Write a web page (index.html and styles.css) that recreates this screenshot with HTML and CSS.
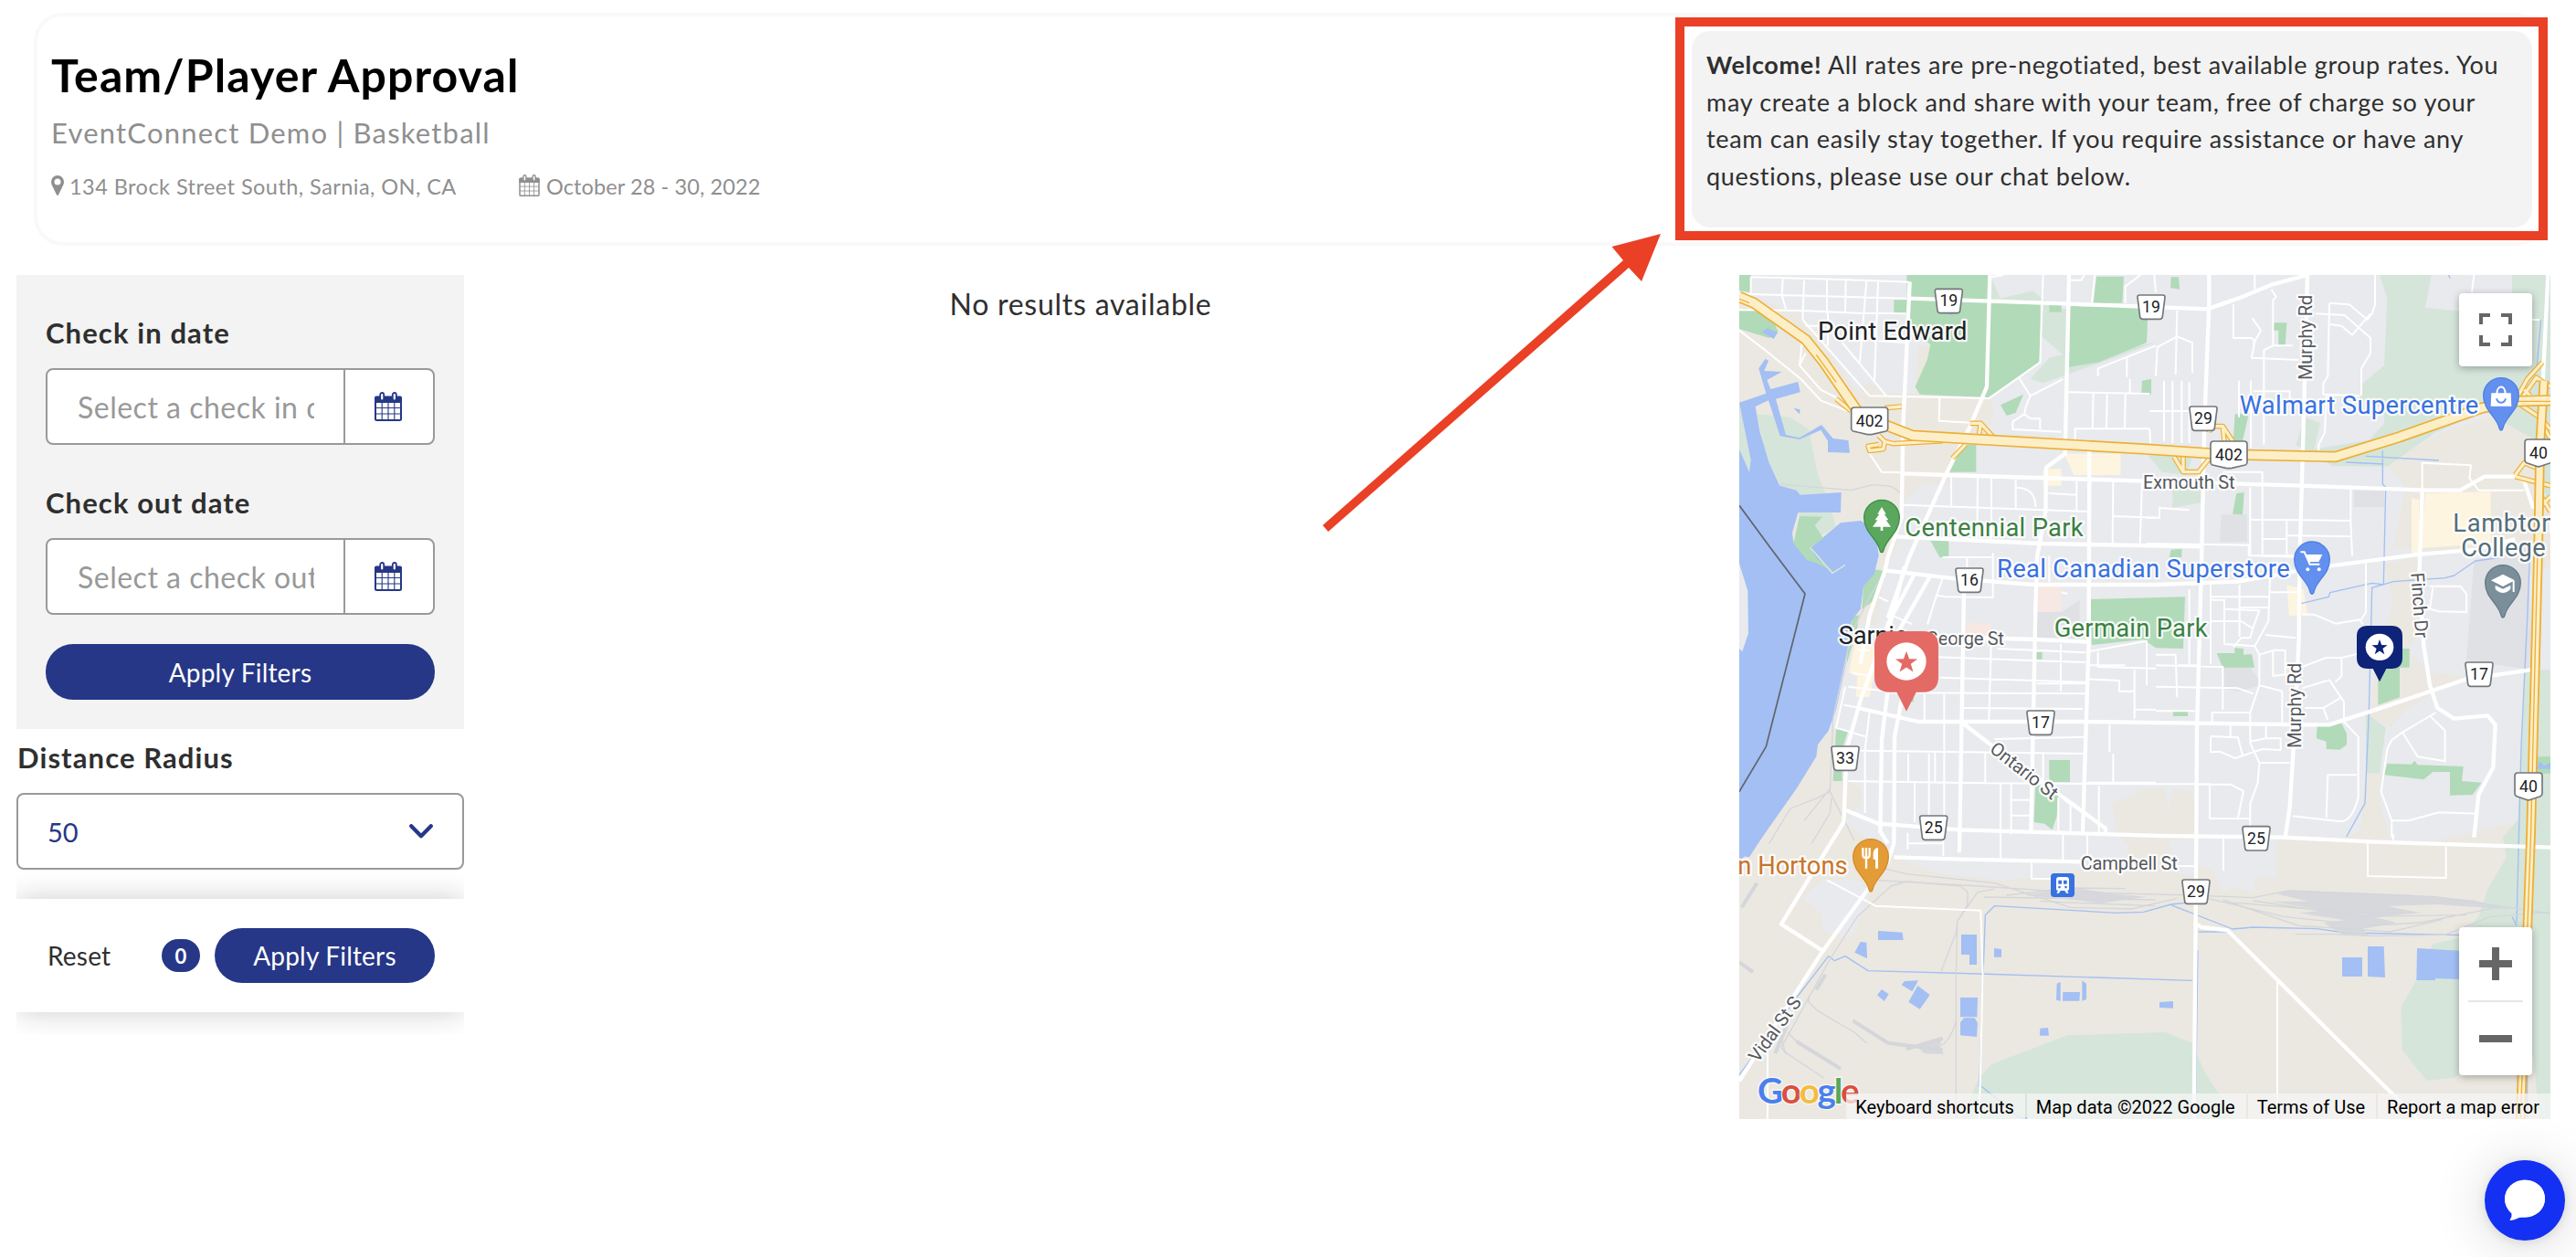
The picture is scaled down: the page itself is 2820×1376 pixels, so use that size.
FILE: index.html
```
<!DOCTYPE html>
<html lang="en">
<head>
  <meta charset="UTF-8">
  <meta name="viewport" content="width=device-width, initial-scale=1.0">
  <title>Team/Player Approval - EventConnect</title>
  <link rel="stylesheet" href="styles.css">
</head>
<body>
  <!-- shared icons -->
  <svg class="defs" width="0" height="0">
    <symbol id="calendar" viewBox="0 0 30 32">
      <path d="M2 4.500h26a2 2 0 0 1 2 2V12H0V6.500a2 2 0 0 1 2-2z" fill="currentColor"/>
      <rect x="1" y="6" width="28" height="25" rx="1.500" fill="none" stroke="currentColor" stroke-width="2"/>
      <path d="M8.200 11v20M15 11v20M21.800 11v20M1 17.500h28M1 24h28" stroke="currentColor" stroke-width="1.100"/>
      <rect x="6.200" y="1" width="4" height="8.500" rx="2" class="ring" stroke="currentColor" stroke-width="1.800"/>
      <rect x="19.800" y="1" width="4" height="8.500" rx="2" class="ring" stroke="currentColor" stroke-width="1.800"/>
    </symbol>
    <symbol id="star" viewBox="-100 -100 200 200">
      <path d="M0-100 24-33 95-31 38 12 59 81 0 40-59 81-38 12-95-31-24-33z" fill="currentColor"/>
    </symbol>
  </svg>

  <header class="event-header">
    <div class="event-info">
      <h1 class="event-title">Team/Player Approval</h1>
      <div class="event-subtitle">EventConnect Demo | Basketball</div>
      <div class="event-meta">
        <svg class="pin-icon" viewBox="0 0 14 22"><path fill="currentColor" fill-rule="evenodd" d="M7 0a7 7 0 0 1 7 7c0 2.500-1 4-2.200 6.500L8 21.200q-1 1.400-2 0L2.200 13.500C1 11 0 9.500 0 7a7 7 0 0 1 7-7zm0 3.600a3.500 3.500 0 1 0 0 7 3.500 3.500 0 0 0 0-7z"/></svg>
        <span class="event-address">134 Brock Street South, Sarnia, ON, CA</span>
        <svg class="date-icon"><use href="#calendar"/></svg>
        <span class="event-date">October 28 - 30, 2022</span>
      </div>
    </div>
    <div class="welcome">
      <strong>Welcome!</strong> All rates are pre-negotiated, best available group rates. You may create a block and share with your team, free of charge so your team can easily stay together. If you require assistance or have any questions, please use our chat below.
    </div>
  </header>

  <main class="content">
    <aside class="sidebar">
      <div class="date-filters">
        <label class="label">Check in date</label>
        <div class="date-input">
          <div class="date-text"><span>Select a check in date</span></div>
          <button class="date-btn" type="button" aria-label="Pick check in date"><svg><use href="#calendar"/></svg></button>
        </div>
        <label class="label">Check out date</label>
        <div class="date-input">
          <div class="date-text"><span>Select a check out date</span></div>
          <button class="date-btn" type="button" aria-label="Pick check out date"><svg><use href="#calendar"/></svg></button>
        </div>
        <button class="btn btn-wide" type="button">Apply Filters</button>
      </div>
      <label class="label radius-label">Distance Radius</label>
      <div class="select">
        <span>50</span>
        <svg class="chevron" viewBox="0 0 26 16"><path d="M2.200 2.200 13 13.300 23.800 2.200" fill="none" stroke="currentColor" stroke-width="4.200" stroke-linecap="round" stroke-linejoin="round"/></svg>
      </div>
      <div class="filter-bar-wrap">
        <div class="filter-bar">
          <span class="reset">Reset</span>
          <span class="count">0</span>
          <button class="btn btn-small" type="button">Apply Filters</button>
        </div>
      </div>
    </aside>

    <section class="results">No results available</section>

    <section class="map">
      <svg class="map-canvas" viewBox="12 3 2664 2772">
        <rect x="12" y="3" width="2664" height="2772" fill="#e8eaed"/>

        <g fill="#ebe8e1">
          <path d="M12 55 100 90 215 135 225 160 300 245 400 385 440 350 480 390 590 392 600 240 640 235 640 400 840 405 850 460 825 525 1040 530 1100 560 790 565 700 685 610 695 555 745 530 900 490 970 470 1150 12 1150z"/>
          <path d="M470 960 400 1120 360 1290 330 1490 300 1500 12 1880V2775H2676V1800L2520 1810 2290 1862 2150 1860 2110 1700 2130 1640 2070 1640 2050 1830 1990 1850 1775 1860 1775 1980 1705 1980 1700 2030 1640 2015 1600 2030 1570 1960 1520 1940 1500 1980 1430 1960 1425 1860 1520 1850 1500 1700 1440 1690 1420 1760 1410 1690 1350 1690 1236 1740 1250 1830 1290 1880 1285 1915 1030 1980 860 1990 670 1970 510 1910 470 1880 360 1800 410 1740 410 1690 360 1660 320 1640 340 1400 390 1200z"/>
          <path d="M2140 620 2320 520 2510 460 2600 530 2676 560V950L2620 1000 2480 850 2480 700 2440 920 2160 900 2200 700z"/>
          <path d="M2130 950 2240 930 2250 1180 2200 1230 2280 1310 2400 1320 2200 1430 2150 1490 2080 1450 2110 1240 2160 1080z"/>
        </g>
        <path d="M285 1990 400 1990 440 2040 380 2180 290 2160 280 2100 220 2050z" fill="#e8eaed"/>

        <g fill="#d5e5da">
          <path d="M2115 3 2140 80 2130 300 2058 360 2050 410 2130 440 2130 490 2080 545 1900 575 1920 490 1870 470 1840 560 1960 630 2140 632 2300 520 2460 450 2600 530 2676 570V3z"/>
          <path d="M70 460 180 470 240 510 270 660 300 730 330 830 260 870 150 700 100 600z"/>
          <path d="M12 420 50 610 45 650 12 575z"/>
          <path d="M835 3 870 80 975 55 1040 105 1100 120 1100 270 1380 225 1200 290 1010 358 968 345 1030 275 1075 265 1000 200V280L835 400z"/>
          <path d="M2520 1850 2532 1915 2470 2020 2440 2110 2380 2180 2290 2200 2240 2310 2185 2410 2190 2550 2270 2648 2360 2640 2450 2575 2620 2570 2640 2775H2676V1300L2590 1300 2580 1560 2570 1790z"/>
          <path d="M740 2775 800 2640 840 2595 1090 2500 1410 2490 1500 2525 1540 2620 1640 2775z"/>
          <path d="M2070 1440 2135 1490 2115 1640 2070 1640z"/>
          <path d="M1350 590 1500 600 1480 660 1400 650zM1435 700H1530V750L1435 768z"/>
          <path d="M2676 560 2640 680 2676 760z"/>
        </g>
        <path d="M2285 3 2265 110 2380 122H2550V3z" fill="#e8eaed"/>
        <path d="M2425 940 2600 900 2620 1300 2400 1270zM1595 790H1680V880H1590zM2030 710H2130V765H2030zM1600 1290H1690L1730 1350 1650 1370 1600 1360zM990 1110H1070L1130 1070V1200H990z" fill="#e0e1e5"/>

        <g fill="#b1dab8">
          <path d="M562 3H835V85L1000 95V290L830 405 605 395 590 370 630 280 640 230 590 200 565 150z"/>
          <path d="M520 85H565V130H520zM1100 105 1355 110 1350 225 1190 290 1095 305zM1185 8H1275L1270 95H1175zM1030 90 1070 95V125H1030z"/>
          <path d="M12 3H50V60L12 55zM12 120H110L140 190 110 210 12 180zM870 430 945 395 920 455 890 465zM740 560H790V650H700z"/>
          <path d="M1335 350 1365 345V395H1333zM1430 10H1455L1458 50 1428 45zM1765 160H1810L1805 235H1783V185H1765zM1640 460H1685L1660 570 1635 540zM1645 720 1670 717 1665 790 1632 788z"/>
          <path d="M455 970 490 975 465 1065 415 1100 420 1020zM385 1125 405 1120 400 1160 365 1280 370 1190zM330 1495 370 1500 350 1560V1665H320z"/>
          <path d="M640 875H700V930H670zM1165 1068 1476 1060 1470 1230 1380 1228 1340 1200 1170 1218zM985 1242H1007V1265H985z"/>
          <path d="M1030 1596H1098V1668H1030zM985 1675 1060 1710 1055 1780 1040 1825 1015 1805 980 1800zM560 1380 585 1370V1405H565z"/>
          <path d="M1580 1245H1640L1638 1228 1668 1230V1250L1695 1248 1704 1292H1600zM1437 1437H1485V1452H1437z"/>
          <path d="M1910 1475H1990L2007 1510V1545L1985 1562 1940 1560V1535L1908 1525z"/>
          <path d="M2170 1230H2213V1292H2181V1390L2110 1415V1290z"/>
          <path d="M2140 1608 2220 1610 2230 1598 2240 1612 2390 1617 2385 1665 2450 1670 2420 1710 2346 1712V1635L2290 1635 2260 1660 2130 1645z"/>
          <path d="M2620 1585H2676V1640H2620zM1430 905 1465 903V930H1425z"/>
        </g>

        <path fill="#fdf5df" d="M1080 590H1265V660H1110zM1010 640H1070V695H1010zM2265 720 2480 715V885L2250 900zM2220 735 2245 742V920H2220zM1810 1020 1865 1035 1878 1115 1818 1124zM390 1220H470L440 1390 395 1388 400 1320 372 1310z"/>
        <path fill="#f8e8e4" d="M990 1025H1070V1108H990zM760 1145 840 1148V1190L755 1185z"/>

        <!-- water -->
        <g fill="#a3bff4">
          <path d="M12 422 100 392 76 310 98 278 108 285 94 318 152 321 103 348 115 378 205 354 212 388 132 410 165 528 210 538 282 495 320 540 370 546 375 587 303 585V548L280 512 210 543 146 532 108 415 65 435 80 520 110 620 145 695 200 710 212 725 347 717 345 783 205 783 186 850 190 880 240 930 245 900 345 817 412 810 460 850 470 925 455 985 420 1025 410 1100 380 1140 370 1230 358 1300 330 1430 305 1500 270 1545 265 1585 200 1690 80 1860 12 1930V575L45 650 50 610z"/>
          <path d="M85 190 105 178 138 192 125 213zM190 440 212 445 210 460zM12 1830H100L45 1915 12 1910zM690 125 718 128 710 136z"/>
          <path d="M468 2157 548 2162 551 2187H468zM410 2193 430 2195 432 2248 391 2228zM741 2169H792V2268H768V2235H741zM849 2214 873 2217V2243H849z"/>
          <path d="M545 2335 555 2322 600 2320 580 2356zM598 2337 638 2367 605 2414 568 2390zM480 2349 503 2365 488 2388 465 2368zM738 2376H795L793 2440H738zM750 2443H785L795 2460 792 2505 738 2500V2458z"/>
          <path d="M1055 2330 1067 2325V2387L1053 2384zM1138 2320 1152 2330V2382L1138 2387zM1075 2358H1131L1129 2387H1074zM1000 2477 1026 2475 1029 2501H999z"/>
          <path d="M1392 2391 1437 2388V2411L1392 2409zM1992 2244H2058V2307H1992zM2076 2208H2129L2133 2310 2076 2307zM2238 2214 2376 2222V2316L2298 2313V2319H2236z"/>
          <path d="M2640 1600 2655 1615 2676 1605V1625H2632z"/>
        </g>
        <path d="M12 950 40 1040 42 1180 22 1240 12 1230z" fill="#e8eaed"/>
        <path d="M210 795 285 797 260 825 288 868 245 900 270 938 290 950 320 975 262 948 235 940 190 885z" fill="#b1dab8"/>
        <path d="M245 898 318 982 360 955" fill="none" stroke="#d5e5da" stroke-width="5"/>
        <g class="stream">
          <path d="M12 2630 205 2370 305 2240 325 2255 360 2240 435 2288 800 2298 1500 2320M800 2670 820 2105 850 2075 1250 2098 1340 2095 1430 2070 1500 2063M808 2668 930 2770 960 2772"/>
          <path d="M1430 2072 1632 2151 1700 2145 1910 2150 2000 2163 2380 2171M1520 2160H1620L2230 2770M1518 2220 1510 2775M2006 1848 2067 1738 2080 1440 2090 1030 2160 1010 2330 998 2360 990 2430 942 2520 930M1858 1082 1948 1060 1952 1046 2090 1015 2128 1020 2135 700 2125 690V580M2070 598 2310 612M2005 618 2128 624M2608 930 2600 1130 2580 1550 2565 2130M2600 2630V2770M2550 2110 2565 2140"/>
          <path d="M2645 150 2630 320M2342 3 2346 14"/>
        </g>
        <path d="M12 760 115 900 228 1050 100 1552 12 1700" class="border-line"/>

        <!-- rail -->
        <g class="rail">
          <path d="M490 980 440 1060 380 1180 320 1460 310 1700 390 1860M310 1700 270 1720 180 1755 110 1870M310 1690 225 1795M315 1720 310 1770 250 1870M400 1930 560 1970 850 2000 1100 2080 1300 2085 1450 2050M450 1990 800 2010 1100 2030 1500 2040M400 2110 510 2010 560 1995 740 2010 762 2030V2070L728 2125 724 2300V2775M850 2020 795 2030 728 2125 725 2160 675 2290M400 2110 310 2250 150 2540 165 2560M240 2370V2390L270 2420 390 2490 430 2525M170 2490 200 2520 345 2610M150 2500 162 2555 290 2640M725 2450Q700 2540 650 2540M145 690 380 710 450 692 510 697 545 720"/>
          <path stroke-width="12" d="M385 2452 500 2525 680 2548M560 2545 680 2510M12 2260 57 2292M200 2520 345 2610M295 2300 265 2350M130 2560 180 2440M20 2080 70 2000"/>
          <path d="M1500 2040 1700 2048 1816 2025 2300 2045 2676 2100M1550 2050 1800 2110 2080 2140 2250 2130 2500 2080M1600 2055 1850 2140 2150 2160 2320 2120M1615 2062 2000 2095 2180 2098M1700 2058 2050 2110 2400 2105M1840 2168H1960L2100 2174 2330 2170 2480 2110 2676 2095M815 2046 1380 2055M890 2040 1100 2016 1280 2018M1000 2060 1380 2075"/>
        </g>
        <path d="M950 2040 1100 2014 1250 2036 1350 2045 1200 2066 1120 2056zM1780 2036 1816 2024 2200 2038 2420 2056 2540 2086 2300 2070 2140 2076 2250 2098 2100 2112 2170 2130 2060 2150 2080 2176 1990 2168 1930 2130 2000 2122 1850 2098 1930 2090 1760 2060 1880 2060zM600 2540 680 2508 670 2535 684 2562 620 2560z" fill="#d4d6db" opacity=".9"/>

        <!-- streets -->
        <g class="street-minor">
          <path d="M50 10 350 18 570 26M50 10V62M12 65 560 80M155 15 152 70 165 115M225 20 220 150M300 18V130M362 20 360 128M430 22 408 290M468 25 456 350M12 118 220 120 400 128 560 130M220 150 440 400 830 408M230 170H270M350 225 495 400M303 130V235M470 220 560 225M220 210 210 300 280 380 330 405"/>
          <path d="M12 185 110 260 215 345 280 415 380 455M230 260 210 300M670 405 668 482 770 488M440 590 480 650 550 652M550 758 1160 780M708 665V760M795 670 793 880M840 670V880M920 675V770M920 702Q985 700 985 765M1028 720 1120 725M1120 680V780M1165 670 1160 890M1240 680 1238 890M1335 680 1328 890M1240 795 1380 800"/>
          <path d="M1010 3 1000 290 830 410M930 340 968 400 955 430 948 460 910 485V510L1070 518M948 460 970 475H1000V510M968 400 1075 345M1090 388 1360 393M1175 390 1172 510M1220 395 1218 510M1280 395 1278 510M1115 555V508H1360M1295 345V390M1090 20H1135L1145 3M1180 3 1170 95M1280 95V40L1330 3M1380 235 1190 310V335M1285 275V338M840 10 880 3"/>
          <path d="M1705 3V50M1375 3 1380 60M1450 120 1445 330M1380 335 1385 240 1450 205 1500 225V325M1407 350V550M1435 350V555M1465 350V555M1490 355V555M1360 450H1490M1360 510 1362 555M1635 100V210H1695L1705 220 1695 275 1850 282M1697 145 1725 185 1700 230M1760 50 1775 75 1765 85V235L1735 250V560M1765 235H1830M1653 350V470M1692 350V570M1700 385H1820V420"/>
          <path d="M1950 95 2015 100 2075 150 2090 130 2100 100V3M1905 130 2000 135 2085 210V260L2055 310V400M1950 95 1945 335 1930 360V395L2050 400M1940 400 1935 520 1915 560V580M1950 165 1990 170 2025 200 2085 130M2425 3 2418 60M2610 150H2640"/>
          <path d="M1600 650H1730V920M1690 700V920M1690 806 2020 810V700M2020 810 2025 925M1810 810V920M1730 870H1810M1810 858 2025 862M1350 800H1392V768L1490 775M1350 885 1685 890V925H1850M2255 715V620L2415 628 2410 670 2440 710H2590M1700 925 1870 930"/>
          <path d="M470 1060 500 1075M500 1115 580 1150M400 1235H440M385 1310 440 1320M370 1355 500 1370M355 1415 410 1425M360 1355 330 1490 430 1520M440 1440 425 1560V1770M410 1565 1150 1575M370 1665 820 1672 1380 1675M820 1672V1570M567 1575V1670M635 1575V1800M685 1380V1800M588 1672V1800M655 1570V1670M620 1380V1470M490 1375 1150 1378M670 1325 1150 1340M660 1258 990 1270 1150 1275M860 1230 1150 1243M840 1190 832 1465M745 1425 1140 1428M660 1055 690 1060 845 1062V915M680 1000 660 1055 630 1150M680 930H840M1068 1215V1370M990 1345H1150M850 1527 1150 1520M1010 1575V1670M870 1675V1840M905 1675V1840M905 1727H970M905 1778H970M1060 1720V1840M1100 1745V1840M1155 1670H1380M1193 1680V1840M1240 1575V1670M1228 1480V1570M1155 1330 1260 1335V1370H1310M1155 1240 1350 1205V1350M1310 1300V1460M1190 1240V1290L1380 1295M1310 1430H1380M1155 1285H1280M760 930V1000M1030 925V1010M1090 1050 1070 1045M565 1835V1890M565 1870H680M682 1835V1910M870 1840V1920M1075 1840V1925M1155 1840V1925M972 1930V1985L1040 1987"/>
          <path d="M1490 1035V1280M1560 1020V1280M1563 1060H1655V1095H1755M1655 1020V1190M1563 1070H1605V1215L1705 1222 1750 1140 1755 1000M1655 1060H1750M1605 1100 1720 1105 1700 1160 1690 1195H1660L1635 1225M1560 1140H1660L1700 1165M1755 1045H1850M1740 1185 1840 1195M1705 1222 1720 1250 1770 1235H1805V1315L1765 1320V1235M1720 1250V1350L1795 1370V1475M1720 1350 1690 1440V1540L1720 1605 1715 1670 1690 1740V1850M1380 1355 1650 1360 1700 1378M1380 1285 1600 1290V1430M1380 1250H1445L1450 1390M1455 1285H1520M1565 1480V1440H1690M1380 1435H1510M1560 1520V1570L1590 1568 1640 1590 1730 1560 1790 1563V1525H1740L1690 1535M1560 1518 1650 1522 1665 1580M1625 1480V1520M1742 1480V1525M1720 1605H1820M1380 1675H1510M1510 1675H1560M1515 1676H1625L1668 1698 1650 1785M1557 1680V1788H1690M1355 1675"/>
          <path d="M1860 1118H1900L1970 1148 2050 1135 2060 1150M2070 950V1110L2055 1135M1860 1290 1940 1260H1990L2040 1248M1990 1260V1320L1970 1340M1860 1360 1950 1333 1998 1405V1470L2045 1520V1720Q2025 1795 1990 1798L1830 1780M1870 1425H1930L1945 1465M1930 1425 1990 1390M2040 1645H1945L1940 1785M2155 1850V1795L2120 1700 2140 1560 2155 1530 2190 1505 2300 1440M2190 1505 2240 1585 2330 1600V1500L2280 1450M2155 1795H2210L2310 1768 2440 1772M2280 1025H2380L2400 1050V1110L2310 1108 2280 1100 2290 1030"/>
          <path d="M300 1990 460 2075 805 2090 812 2300 800 2775M105 2560V2775M1602 1850V1958M2076 1860V1977L2333 1983V1880M1779 2320V2775M2160 1840V1860M1435 1943 1510 1945"/>
        </g>
        <g class="street">
          <path d="M570 80 1100 98 1550 115 1650 80 1760 35 1880 3M1095 3 1082 590 1020 635 1018 780 990 930 985 1100 970 1835M835 3 825 370 770 500 690 660 570 930 500 1130"/>
          <path d="M572 25 550 500 545 800 500 930 490 975 440 1120 410 1280M550 655 690 660 1350 680 1860 695 2270 710H2380L2460 665 2560 665 2590 680 2620 770M520 862 1000 885 1530 895M1555 3V100L1540 480 1530 950 1515 1500 1512 2000 1505 2775M1878 3 1865 500 1852 950 1850 1200 1832 1560 1820 1750 1805 1850"/>
          <path d="M490 973 720 1000 980 1020H1380L1650 1010 1900 965 2250 920 2430 905 2560 870M402 1425 600 1470H1150L1880 1480 1950 1480 2150 1415 2400 1330 2610 1300M360 1760 470 1805 735 1825 1400 1845 1800 1850 2100 1865 2676 1883M620 1190 990 1200 1155 1208M750 1040 735 1900M1162 570 1160 1200 1140 1835M740 1470 830 1540 1050 1700 1215 1820V1840M520 1915 740 1922 1135 1930"/>
          <path d="M1505 2130 1530 2145 1615 2155 2240 2775M2255 715 2245 1000 2260 1220 2280 1350 2305 1425 2360 1460 2470 1450 2495 1480 2488 1620 2440 1710 2425 1850"/>
          <path d="M585 990 500 1150 410 1400 365 1560 355 1800 290 1905 150 2135 290 2225M640 990 520 1200 480 1530 475 1830 500 1870M555 960 500 1180M545 1400 522 1520 520 1870 500 1930 285 2225 12 2650M2668 3 2650 380"/>
        </g>

        <!-- highways -->
        <g class="ramp-edge"><path id="ramps" d="M380 450 330 410M490 440 545 435M470 530 490 550 485 575 440 580 435 565 470 560M490 550 520 557 680 548M770 490H805L850 540M805 490 800 525M755 560 712 605M1555 520 1560 500 1600 500 1640 560M1440 600 1470 650 1520 650 1560 600M1470 650V600M1600 500 1605 550M2570 400 2600 345 2650 290M2580 410 2630 340 2676 370M2580 430 2640 470 2676 510M2590 380 2610 400M2640 480 2676 540M2560 660 2590 620 2640 640M2560 665 2676 695M2640 770 2676 730M2640 720 2676 780"/></g>
        <g class="ramp-fill"><use href="#ramps"/></g>
        <path class="hwy-edge thin" d="M2655 350 2642 560 2636 900 2612 1830 2578 2775"/>
        <path class="hwy-fill thin" d="M2655 350 2642 560 2636 900 2612 1830 2578 2775"/>
        <path class="hwy-line" d="M2634 900 2612 1830 2578 2775"/>
        <path class="hwy-edge" d="M12 75 60 95 230 215 290 290 400 450 490 495 580 530 830 545 1350 575 1600 592 1970 600 2180 535 2450 440 2560 418 2676 415"/>
        <path class="hwy-fill" d="M12 75 60 95 230 215 290 290 400 450 490 495 580 530 830 545 1350 575 1600 592 1970 600 2180 535 2450 440 2560 418 2676 415"/>
        <path d="M265 265 330 355M2570 418H2676M12 82 45 95" class="hwy-line"/>

        <!-- labels -->
        <g class="town">
          <text x="270" y="215" textLength="490">Point Edward</text>
          <text x="338" y="1215" textLength="228">Sarnia</text>
        </g>
        <g class="street-name">
          <text x="625" y="1218" textLength="257">George St</text>
          <text x="1338" y="705" textLength="302">Exmouth St</text>
          <text x="1133" y="1955" textLength="319">Campbell St</text>
          <text transform="translate(1893 348) rotate(-90)" textLength="280">Murphy Rd</text>
          <text transform="translate(1857 1557) rotate(-90)" textLength="280">Murphy Rd</text>
          <text transform="translate(831 1566) rotate(38)" textLength="264">Ontario St</text>
          <text transform="translate(2218 982) rotate(86)" textLength="215">Finch Dr</text>
          <text transform="translate(73 2592) rotate(-54)" textLength="248">Vidal St S</text>
        </g>
        <g class="poi">
          <text class="green" x="556" y="860" textLength="586">Centennial Park</text>
          <text class="green" x="1046" y="1190" textLength="504">Germain Park</text>
          <text class="blue" x="1655" y="458" textLength="785">Walmart Supercentre</text>
          <text class="blue" x="858" y="995" textLength="962">Real Canadian Superstore</text>
          <text class="orange" x="368" y="1972" text-anchor="end">n Hortons</text>
          <text class="slate" x="2356" y="845" textLength="336">Lambton</text>
          <text class="slate" x="2383" y="927" textLength="277">College</text>
        </g>

        <!-- route shields -->
        <g class="shields">
          <g transform="translate(700 88)"><use href="#county"/><text>19</text></g>
          <g transform="translate(1365 108)"><use href="#county"/><text>19</text></g>
          <g transform="translate(1536 474)"><use href="#county"/><text>29</text></g>
          <g transform="translate(768 1005)"><use href="#county"/><text>16</text></g>
          <g transform="translate(1002 1473)"><use href="#county"/><text>17</text></g>
          <g transform="translate(360 1590)"><use href="#county"/><text>33</text></g>
          <g transform="translate(650 1818)"><use href="#county"/><text>25</text></g>
          <g transform="translate(2442 1314)"><use href="#county"/><text>17</text></g>
          <g transform="translate(1710 1853)"><use href="#county"/><text>25</text></g>
          <g transform="translate(1512 2028)"><use href="#county"/><text>29</text></g>
          <g transform="translate(440 482)"><path d="M-50-44H50Q60-44 60-34V26Q60 32 54 34L10 44Q0 46-10 44L-54 34Q-60 32-60 26V-34Q-60-44-50-44z"/><text>402</text></g>
          <g transform="translate(1620 593)"><path d="M-50-44H50Q60-44 60-34V26Q60 32 54 34L10 44Q0 46-10 44L-54 34Q-60 32-60 26V-34Q-60-44-50-44z"/><text>402</text></g>
          <g transform="translate(2637 587)"><path d="M-35-44H35Q45-44 45-34V24Q45 30 39 33L8 44Q0 47-8 44L-39 33Q-45 30-45 24V-34Q-45-44-35-44z"/><text>40</text></g>
          <g transform="translate(2604 1682)"><path d="M-35-44H35Q45-44 45-34V24Q45 30 39 33L8 44Q0 47-8 44L-39 33Q-45 30-45 24V-34Q-45-44-35-44z"/><text>40</text></g>
        </g>
        <defs>
          <path id="county" d="M-38-39H38Q46-39 45-31L37 32Q36 40 28 40H-28Q-36 40-37 32L-45-31Q-46-39-38-39z"/>
          <path id="drop" d="M0 114C-3 114-5 112-6 107-14 68-58 50-58 0A58 58 0 0 1 58 0C58 50 14 68 6 107 5 112 3 114 0 114z"/>
        </defs>

        <!-- places -->
        <g stroke-width="4">
          <g transform="translate(480 800)">
            <use href="#drop" fill="#5aa75d" stroke="#3f8f47"/>
            <path d="M0-35 14-12H8L22 8H14L30 30H4V43H-4V30H-30L-14 8H-22L-8-12H-14z" fill="#fff"/>
          </g>
          <g transform="translate(2514 399)">
            <use href="#drop" fill="#6390ee" stroke="#4f80e4"/>
            <path d="M-32-8H32L34 35H-34z" fill="#fff"/>
            <path d="M-14-5C-14-36 14-36 14-5" fill="none" stroke="#fff" stroke-width="6"/>
            <path d="M-15 10C-10 28 10 28 15 10" fill="none" stroke="#6390ee" stroke-width="6"/>
          </g>
          <g transform="translate(1893 937)">
            <use href="#drop" fill="#6390ee" stroke="#4f80e4"/>
            <path d="M-38-24H-25L-7 16H25" fill="none" stroke="#fff" stroke-width="6"/>
            <path d="M-20-16H34L22 8H-10z" fill="#fff"/>
            <circle cx="-14" cy="33" r="6" fill="#fff"/><circle cx="23" cy="33" r="6" fill="#fff"/>
          </g>
          <g transform="translate(2520 1014)">
            <use href="#drop" fill="#7b8f9a" stroke="#647a86"/>
            <path d="M0-28 39-8 0 12-39-8zM-25 8 0 20 25 8V20Q0 46-25 20zM32-6H38V30H32z" fill="#fff"/>
          </g>
          <g transform="translate(444 1914)">
            <use href="#drop" fill="#e49d36" stroke="#d58a2d"/>
            <path d="M-26-30V-8Q-26 4-15 4T-4-8V-30M-15-30V38" fill="none" stroke="#fff" stroke-width="7"/>
            <path d="M24-30V38H15V8H8V-12Q10-30 24-30z" fill="#fff"/>
          </g>
          <g transform="translate(1074 2007)">
            <rect x="-39" y="-39" width="78" height="78" rx="11" fill="#3871e0"/>
            <path d="M-12-27H12Q21-27 21-18V12Q21 18 15 18L20 26H12L7 18H-7L-12 26H-20L-15 18Q-21 18-21 12V-18Q-21-27-12-27z" fill="#fff"/>
            <path d="M-14-16H-3V-4H-14zM3-16H14V-4H3zM-14 3H-7V10H-14zM7 3H14V10H7z" fill="#3871e0"/>
          </g>
        </g>

        <!-- hotel markers -->
        <g color="#e46a66">
          <path d="M506 1173H616Q666 1173 666 1223V1323Q666 1373 616 1373H593L561 1436 529 1373H506Q456 1373 456 1323V1223Q456 1173 506 1173z" fill="currentColor"/>
          <ellipse cx="561" cy="1272" rx="65" ry="62" fill="#fff"/>
          <use href="#star" x="523" y="1238" width="76" height="76"/>
        </g>
        <g color="#0d2478">
          <path d="M2076 1155H2154Q2190 1155 2190 1190V1260Q2190 1296 2154 1296H2137L2115 1339 2093 1296H2076Q2040 1296 2040 1260V1190Q2040 1155 2076 1155z" fill="currentColor"/>
          <ellipse cx="2115" cy="1225" rx="46" ry="44" fill="#fff"/>
          <use href="#star" x="2088" y="1200" width="54" height="54"/>
        </g>

        <text class="google" x="72" y="2723" textLength="335"><tspan fill="#4a80ec">G</tspan><tspan fill="#d8503f">o</tspan><tspan fill="#f2bd41">o</tspan><tspan fill="#4a80ec">g</tspan><tspan fill="#58a65c">l</tspan><tspan fill="#d8503f">e</tspan></text>
      </svg>
      <button class="map-btn fullscreen-btn" type="button" aria-label="Fullscreen">
        <svg width="36" height="36" viewBox="0 0 36 36"><path d="M2 12V2h10M24 2h10v10M34 24v10H24M12 34H2V24" fill="none" stroke="#666" stroke-width="4"/></svg>
      </button>
      <div class="map-btn zoom-btns">
        <button type="button" aria-label="Zoom in"><svg width="36" height="36" viewBox="0 0 36 36"><path d="M0 18h36M18 0v36" stroke="#666" stroke-width="8"/></svg></button>
        <button type="button" aria-label="Zoom out"><svg width="36" height="36" viewBox="0 0 36 36"><path d="M0 18h36" stroke="#666" stroke-width="8"/></svg></button>
      </div>
      <div class="map-credits">
        <span>Keyboard shortcuts</span>
        <span>Map data ©2022 Google</span>
        <span>Terms of Use</span>
        <span>Report a map error</span>
      </div>
    </section>
  </main>

  <!-- callout drawn over the welcome message -->
  <div class="callout-box"></div>
  <svg class="callout-arrow" width="374" height="328" viewBox="0 0 374 328"><path d="M370 0 316.500 14 329 29 0 319 6 326 335 37 349 52z" fill="#ea4025"/></svg>

  <button class="chat-btn" type="button" aria-label="Chat">
    <svg width="46" height="46" viewBox="0 0 46 46"><path d="M23 1C36 1 45 9.500 45 21S36 41 23 41.500C19 41.500 17 41.500 15.500 42.500Q11 44.500 7.500 45 6 45 7 43.500 9 41 8.500 37.500 1 31 1 21 1 9.500 23 1z" fill="#fff"/><ellipse cx="23" cy="21" rx="22" ry="20.500" fill="#fff"/></svg>
  </button>
</body>
</html>
```
FILE: styles.css
```
:root {
  --navy: #263787;
  --gray-bg: #f3f3f3;
  --gray-line: #999;
  --text: #2f2f2f;
  --red: #ea4025;
  --main-font: 'Lato', 'Open Sans', sans-serif;
  --map-font: 'Roboto', sans-serif;
}
* {
  box-sizing: border-box;
}
body {
  margin: 0;
  height: 1376px;
  position: relative;
  overflow: hidden;
  background: #fff;
  color: var(--text);
  font-family: var(--main-font);
  display: flex;
  flex-direction: column;
}
button {
  border: none;
  padding: 0;
  font-family: inherit;
  cursor: pointer;
}
.defs {
  position: absolute;
}
.ring {
  fill: #fff;
}

/* header */
.event-header {
  margin: 14px 35px 0 37px;
  height: 255px;
  border: 4px solid #f9f9f9;
  border-radius: 32px;
  display: flex;
  justify-content: space-between;
  padding: 0 9px 0 15px;
}
.event-info {
  padding-top: 34px;
}
.event-title {
  margin: 0;
  font-size: 50px;
  font-weight: 700;
  line-height: 60px;
  letter-spacing: 1.1px;
  color: #000;
}
.event-subtitle {
  margin-top: 13px;
  font-size: 31px;
  line-height: 40px;
  letter-spacing: 1.2px;
  color: #8f8f8f;
}
.event-meta {
  margin-top: 24px;
  display: flex;
  font-size: 23.5px;
  line-height: 30px;
  color: #8f8f8f;
}
.pin-icon {
  width: 14px;
  height: 22px;
  margin: 3px 6px 0 0;
}
.event-address {
  width: 492px;
  letter-spacing: 0.45px;
}
.date-icon {
  width: 23px;
  height: 24px;
  margin: 2px 7px 0 0;
}
.event-date {
  letter-spacing: 0.1px;
}
.welcome {
  width: 920px;
  height: 215px;
  margin-top: 16px;
  padding: 17px 10px 0 16px;
  border-radius: 20px;
  background: var(--gray-bg);
  font-size: 27px;
  line-height: 40.6px;
  letter-spacing: 0.68px;
}

/* page columns */
.content {
  margin: 32px 28px 0 18px;
  display: grid;
  grid-template-columns: 490px 1350px 1fr;
  align-items: start;
}
.content .map {
  justify-self: end;
}
.label {
  display: block;
  font-size: 31px;
  font-weight: 700;
  line-height: 40px;
  letter-spacing: 1.1px;
}
.date-filters {
  height: 497px;
  padding: 43px 32px 0;
  background: var(--gray-bg);
}
.date-input {
  display: flex;
  height: 84px;
  margin: 19px 0 43px;
  border: 2px solid var(--gray-line);
  border-radius: 8px;
  background: #fff;
}
.date-text {
  flex: 1;
  min-width: 0;
  padding: 0 32px 0 33px;
  border-right: 2px solid var(--gray-line);
  font-size: 32px;
  line-height: 81px;
  letter-spacing: 0.5px;
  color: #999;
}
.date-text span {
  display: block;
  overflow: hidden;
  white-space: nowrap;
}
.date-btn {
  width: 96px;
  background: none;
  color: var(--navy);
}
.date-btn svg {
  width: 30px;
  height: 32px;
  display: block;
  margin: 0 auto 0 32px;
}
.btn {
  height: 60px;
  border-radius: 30px;
  background: var(--navy);
  color: #fff;
  font-size: 28px;
  letter-spacing: 0.2px;
}
.btn-wide {
  display: block;
  width: 100%;
  height: 61px;
  margin-top: -11px;
}
.radius-label {
  margin: 11px 0 19px 1px;
}
.select {
  display: flex;
  align-items: center;
  justify-content: space-between;
  height: 84px;
  padding: 0 32px;
  border: 2px solid var(--gray-line);
  border-radius: 8px;
  font-size: 29px;
  line-height: 34px;
  color: var(--navy);
}
.select span {
  padding-top: 2px;
}
.chevron {
  width: 26px;
  height: 16px;
}
.filter-bar-wrap {
  padding: 32px 0 24px;
  overflow: hidden;
}
.filter-bar {
  display: flex;
  align-items: center;
  height: 124px;
  padding: 0 32px 0 34px;
  background: #fff;
  box-shadow: 0 0 30px rgba(0, 0, 0, 0.2);
}
.reset {
  font-size: 28px;
  letter-spacing: 0.2px;
  margin-right: auto;
}
.count {
  width: 42px;
  height: 36px;
  margin-right: 16px;
  border-radius: 18px;
  background: var(--navy);
  color: #fff;
  font-size: 22px;
  font-weight: 700;
  line-height: 37px;
  text-align: center;
}
.btn-small {
  width: 241px;
}
.results {
  padding-top: 12px;
  text-align: center;
  font-size: 32px;
  line-height: 40px;
  letter-spacing: 0.75px;
}

/* map */
.map {
  position: relative;
  width: 888px;
  height: 924px;
  overflow: hidden;
  font-family: var(--map-font);
}
.map-canvas {
  display: block;
  width: 888px;
  height: 924px;
}
.street,
.street-minor,
.stream,
.rail,
.ramp-edge,
.ramp-fill,
.hwy-edge,
.hwy-fill,
.hwy-line,
.border-line {
  fill: none;
  stroke-linejoin: round;
}
.street {
  stroke: #fff;
  stroke-width: 13;
}
.street-minor {
  stroke: #fff;
  stroke-width: 6;
}
.stream {
  stroke: #a3bff4;
  stroke-width: 4;
}
.rail {
  stroke: #d4d6db;
  stroke-width: 4;
}
.border-line {
  stroke: #5f6368;
  stroke-width: 5;
}
.ramp-edge {
  stroke: #eeaf36;
  stroke-width: 17;
}
.ramp-fill {
  stroke: #fcefc8;
  stroke-width: 10;
}
.hwy-edge {
  stroke: #eeaf36;
  stroke-width: 37;
}
.hwy-fill {
  stroke: #fcefc8;
  stroke-width: 27;
}
.hwy-edge.thin {
  stroke-width: 32;
}
.hwy-fill.thin {
  stroke-width: 21;
}
.hwy-line {
  stroke: #eeaf36;
  stroke-width: 4;
}
.town text,
.street-name text,
.poi text {
  paint-order: stroke;
  stroke: #fff;
  stroke-opacity: 0.85;
  stroke-width: 14;
  stroke-linejoin: round;
}
.town text {
  font-size: 82px;
  fill: #202124;
}
.street-name text {
  font-size: 61px;
  fill: #55585d;
}
.poi text {
  font-size: 82px;
}
.poi .green {
  fill: #3b8043;
}
.poi .blue {
  fill: #3871e0;
}
.poi .orange {
  fill: #ca7427;
}
.poi .slate {
  fill: #546e7a;
}
.shields path,
.shields use {
  fill: #fff;
  stroke: #74777b;
  stroke-width: 5;
}
.shields text {
  font-size: 53px;
  fill: #202124;
  text-anchor: middle;
  dominant-baseline: central;
}
.google {
  font-family: 'Lato', sans-serif;
  font-size: 116px;
  font-weight: 700;
  paint-order: stroke;
  stroke: #fff;
  stroke-opacity: 0.7;
  stroke-width: 8;
}
.map-btn {
  position: absolute;
  right: 20px;
  width: 80px;
  background: #fff;
  border-radius: 4px;
  box-shadow: 0 2px 8px rgba(0, 0, 0, 0.3);
}
.fullscreen-btn {
  top: 20px;
  height: 80px;
}
.map-btn svg {
  display: block;
  margin: 0 auto;
}
.zoom-btns {
  top: 714px;
  height: 162px;
  padding: 0 10px;
}
.zoom-btns button {
  display: block;
  width: 60px;
  height: 80px;
  background: none;
}
.zoom-btns button + button {
  height: 82px;
  border-top: 2px solid #e6e6e6;
}
.map-credits {
  position: absolute;
  right: 0;
  bottom: 0;
  display: flex;
  gap: 2px;
  font-size: 20px;
  line-height: 30px;
  height: 28px;
  color: #000;
}
.map-credits span {
  padding: 0 12px 0 10px;
  background: rgba(245, 245, 245, 0.75);
  white-space: nowrap;
}

/* overlays */
.callout-box {
  position: absolute;
  left: 1834px;
  top: 19px;
  width: 955px;
  height: 244px;
  border: 10px solid var(--red);
}
.callout-arrow {
  position: absolute;
  left: 1448px;
  top: 256px;
}
.chat-btn {
  position: absolute;
  right: 12px;
  bottom: 18px;
  width: 88px;
  height: 88px;
  border-radius: 50%;
  background: #1430f2;
  box-shadow: 0 2px 12px rgba(0, 0, 0, 0.1), 0 4px 60px rgba(0, 0, 0, 0.16);
}
.chat-btn svg {
  display: block;
  margin: 0 auto;
}
```
